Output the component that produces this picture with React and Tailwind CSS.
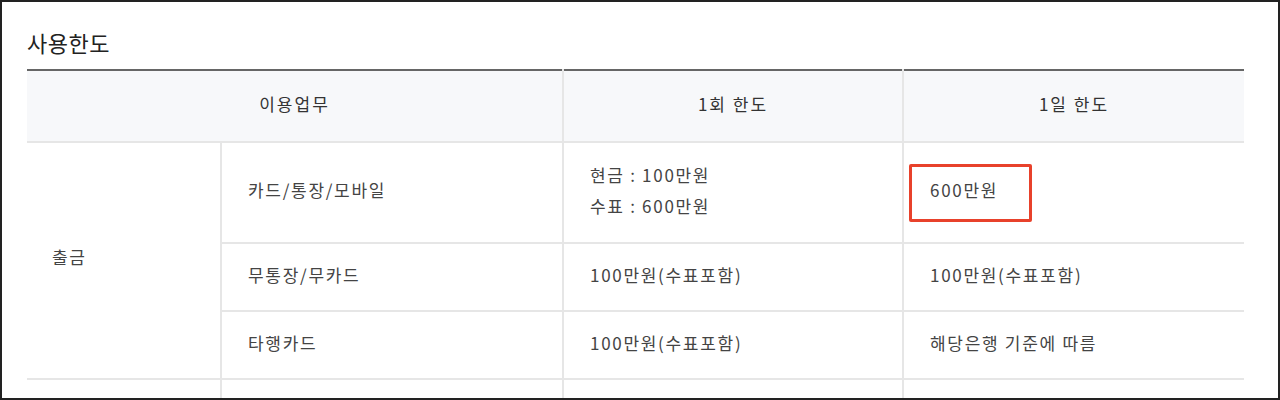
import React from 'react';

const font = { fontFamily: '"Noto Sans CJK KR", "Noto Sans", sans-serif' };

const cell = 'pl-[26px] pb-[5px] border-l-2 border-b-2 border-[#e6e6e6]';

export default function App() {
  return (
    <div
      className="w-[1280px] h-[400px] border-2 border-[#222] bg-white overflow-hidden text-[#333]"
      style={font}
    >
      <div className="pl-[25px] pr-[34px] pt-[25px]">
        {/* Title */}
        <h2 className="text-[22px] leading-[31px] tracking-[0.5px] text-[#222] font-normal">사용한도</h2>

        {/* Limits table */}
        <table className="mt-[11px] w-[1217px] border-collapse table-fixed text-[17px] tracking-[1.7px] text-[#444]">
          <colgroup>
            <col className="w-[194px]" />
            <col className="w-[342px]" />
            <col className="w-[340px]" />
            <col className="w-[341px]" />
          </colgroup>
          <thead>
            <tr className="bg-[#f7f8fa] border-t-2 border-[#666]">
              <th colSpan={2} className="h-[72px] pb-[4px] font-normal tracking-[2px] text-[#333] border-b-2 border-[#e6e6e6]">
                이용업무
              </th>
              <th className="pb-[4px] font-normal tracking-[2px] text-[#333] border-b-2 border-l-2 border-[#e6e6e6]">1회 한도</th>
              <th className="pb-[4px] font-normal tracking-[2px] text-[#333] border-b-2 border-l-2 border-[#e6e6e6]">1일 한도</th>
            </tr>
          </thead>
          <tbody>
            <tr>
              <td rowSpan={3} className="pl-[25px] pb-[8px] border-b-2 border-[#e6e6e6] align-middle">
                출금
              </td>
              <td className={`h-[101px] ${cell}`}>카드/통장/모바일</td>
              <td className={`${cell} leading-[31px]`}>
                <div>현금 : 100만원</div>
                <div>수표 : 600만원</div>
              </td>
              <td className="pl-[5px] border-l-2 border-b-2 border-[#e6e6e6]">
                <div className="w-[123px] h-[58px] border-[3px] border-[#e8412b] rounded-[2px] flex items-center pl-[18px] pb-[5px]">
                  600만원
                </div>
              </td>
            </tr>
            <tr>
              <td className={`h-[68px] ${cell}`}>무통장/무카드</td>
              <td className={cell}>100만원(수표포함)</td>
              <td className={cell}>100만원(수표포함)</td>
            </tr>
            <tr>
              <td className={`h-[68px] ${cell}`}>타행카드</td>
              <td className={cell}>100만원(수표포함)</td>
              <td className={cell}>해당은행 기준에 따름</td>
            </tr>
            <tr>
              <td className="h-[68px]"></td>
              <td className="border-l-2 border-[#e6e6e6]"></td>
              <td className="border-l-2 border-[#e6e6e6]"></td>
              <td className="border-l-2 border-[#e6e6e6]"></td>
            </tr>
          </tbody>
        </table>
      </div>
    </div>
  );
}
